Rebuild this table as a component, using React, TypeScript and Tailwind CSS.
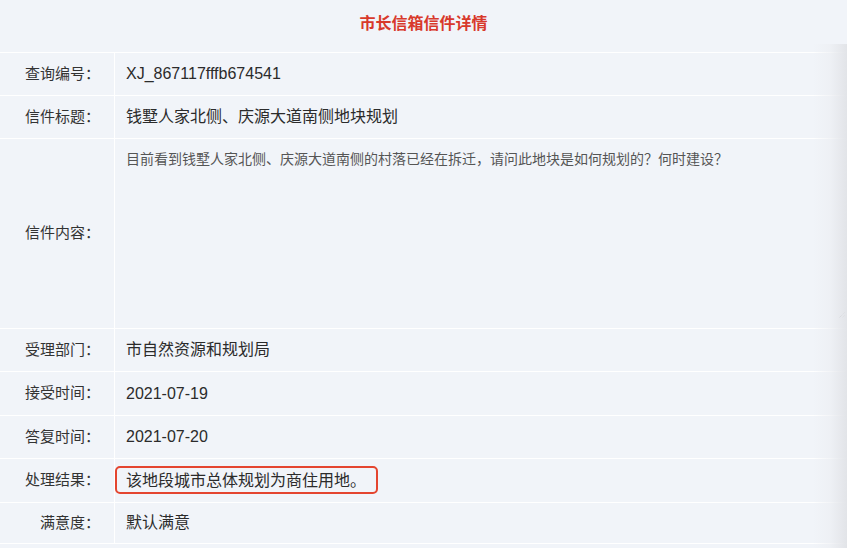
import React from "react";

const rows = [
  { label: "查询编号", value: "XJ_867117fffb674541", h: "h-[43px]" },
  { label: "信件标题", value: "钱墅人家北侧、庆源大道南侧地块规划", h: "h-[43px]" },
];

const rowsAfter = [
  { label: "受理部门", value: "市自然资源和规划局", h: "h-[43px]" },
  { label: "接受时间", value: "2021-07-19", h: "h-[44px]" },
  { label: "答复时间", value: "2021-07-20", h: "h-[43px]" },
  { label: "处理结果", value: "该地段城市总体规划为商住用地。", h: "h-[44px]", mark: true },
  { label: "满意度", value: "默认满意", h: "h-[41px]" },
];

const font = "font-['Liberation_Sans','Noto_Sans_CJK_SC',sans-serif]";

const Row = ({ label, value, h, mark }: { label: string; value: string; h: string; mark?: boolean }) => (
  <div className={`flex border-b border-white ${h}`}>
    <div className="w-[115px] shrink-0 border-r border-white flex items-center justify-end pr-[14px] text-[15px] text-[#333]">
      {label}：
    </div>
    <div className="relative flex-1 flex items-center pl-[11px] text-[16px] text-[#2b2b2b]">
      {mark && (
        <div className="absolute left-0 top-[7px] w-[263px] h-[28px] border-2 border-[#e4452f] rounded-[5px]" />
      )}
      {value}
    </div>
  </div>
);

const App = () => {
  return (
    <div className={`relative w-[847px] h-[548px] overflow-hidden bg-[#f1f4f9] ${font}`}>
      <div className="h-[53px] border-b border-white flex justify-center pt-[12px]">
        <span className="text-[16px] font-bold text-[#d8392b]">市长信箱信件详情</span>
      </div>
      {rows.map((r) => (
        <Row key={r.label} {...r} />
      ))}
      <div className="flex h-[190px] border-b border-white">
        <div className="w-[115px] shrink-0 border-r border-white flex items-center justify-end pr-[14px] text-[15px] text-[#333]">
          信件内容：
        </div>
        <div className="relative flex-1 pl-[11px] pt-[10px] text-[14px] leading-[20px] text-[#555]">
          目前看到钱墅人家北侧、庆源大道南侧的村落已经在拆迁，请问此地块是如何规划的？何时建设？
          <svg className="absolute right-[1px] bottom-[9px]" width="8" height="8" viewBox="0 0 8 8">
            <path d="M7 1L1 7M7 4L4 7" stroke="#777" strokeWidth="1" strokeDasharray="1 1" />
          </svg>
        </div>
      </div>
      {rowsAfter.map((r) => (
        <Row key={r.label} {...r} />
      ))}
      <div className="absolute right-0 top-[44px] bottom-0 w-[34px] bg-gradient-to-r from-transparent via-[#eceef2]/60 to-[#e2e4e8] pointer-events-none" />
    </div>
  );
};

export default App;
